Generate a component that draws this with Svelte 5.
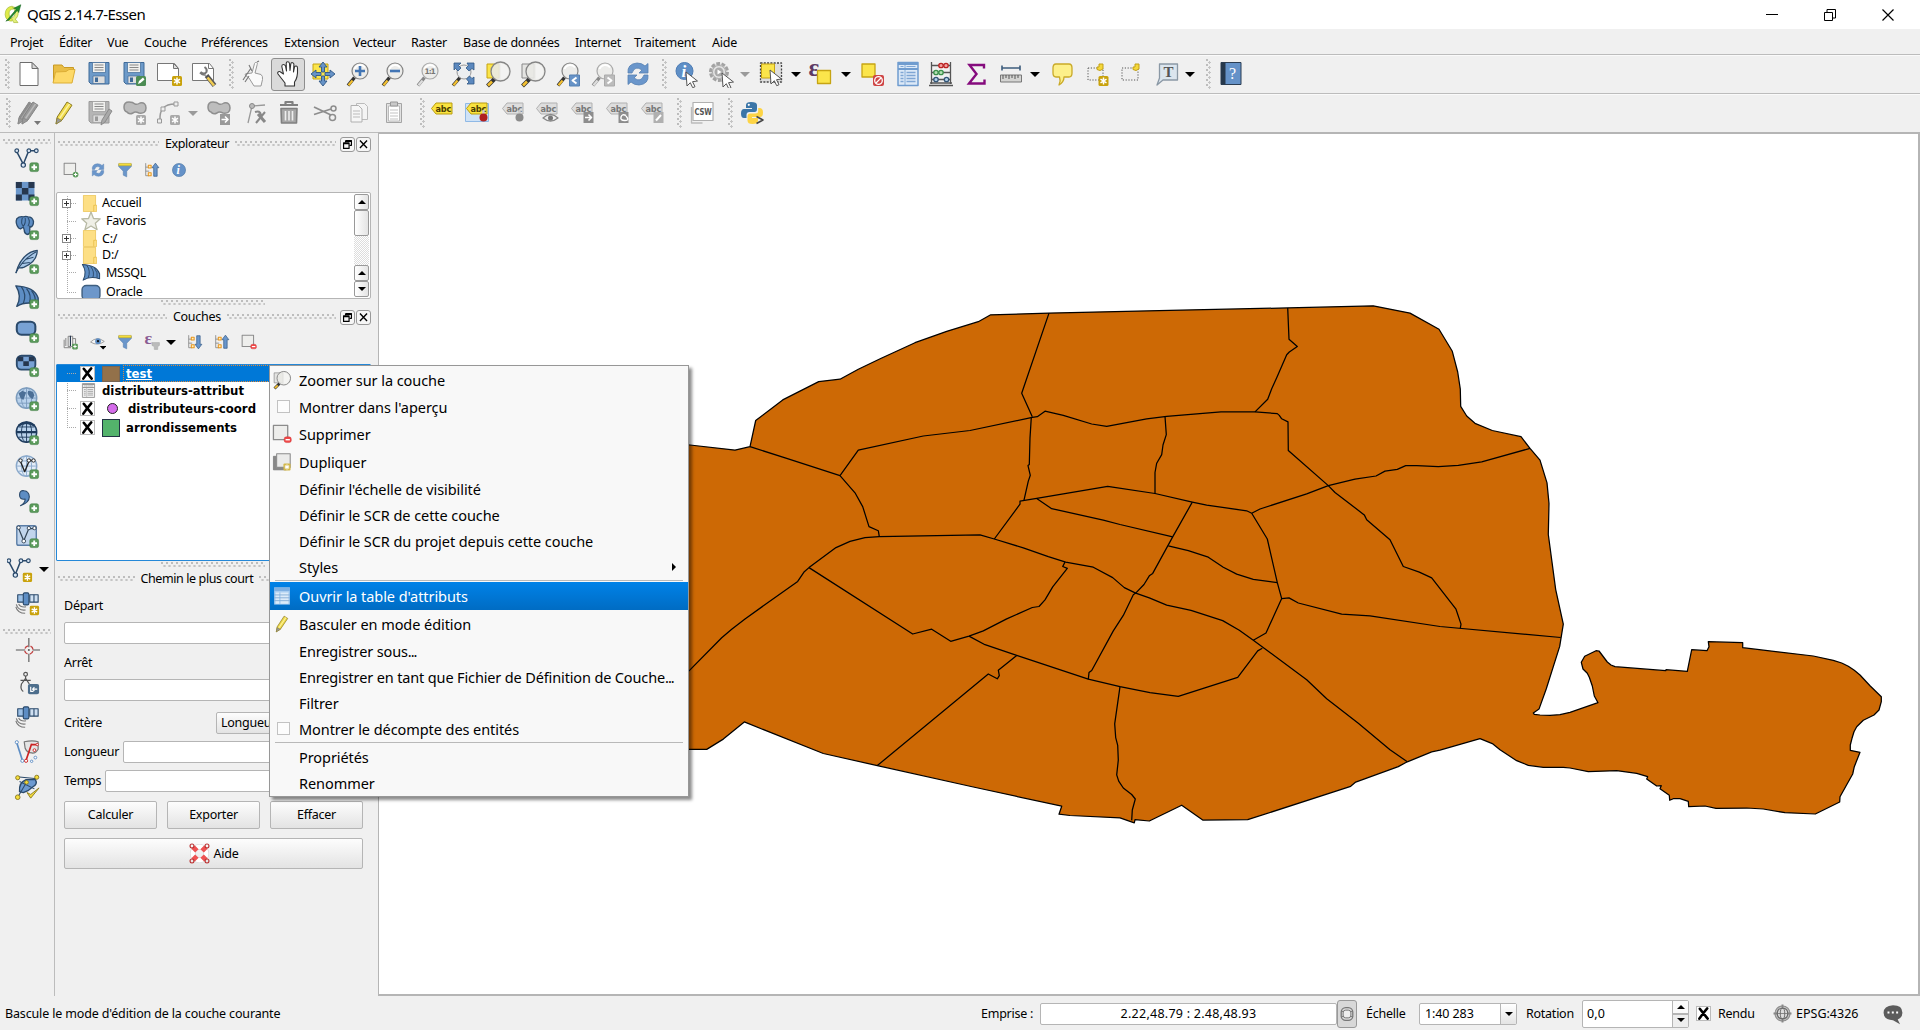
<script>
  const INK = '#2b4a6b';
  const svg = (body, size = 28) =>
    `<svg width="${size}" height="${size}" viewBox="0 0 28 28" fill="none" stroke-linejoin="round">${body}</svg>`;

  // Shared icon parts
  const sparkle = (x, y, c = '#c9a20c') =>
    `<rect x="${x}" y="${y}" width="10" height="10" rx="1.5" fill="${c}"/><path d="M${x + 5} ${y + 1.5}v7M${x + 2} ${y + 3.2}l6 3.6M${x + 2} ${y + 6.8}l6-3.6" stroke="#fff" stroke-width="1.5"/>`;
  const plus = (x = 17, y = 17) =>
    `<rect x="${x}" y="${y}" width="9.5" height="9.5" rx="2" fill="#5a9a5a" stroke="#3f7d43" stroke-width=".6"/><path d="M${x + 4.75} ${y + 1.8}v6M${x + 1.8} ${y + 4.75}h6" stroke="#fff" stroke-width="2"/>`;
  const arrowBadge = (x, y, c = '#8d8d8d') =>
    `<rect x="${x}" y="${y}" width="10" height="11" fill="${c}"/><path d="M${x + 1.5} ${y + 5.5}h6M${x + 5} ${y + 2.5}l3 3-3 3" stroke="#fff" stroke-width="1.6"/>`;
  const lens = (inner = '', handle = '#f2bf30', ring = '#858585', dark = '#333') =>
    `<path d="M10.500 17.500L4 25.500" stroke="${dark}" stroke-width="3.400"/><path d="M8.500 20.500L4.500 25.300" stroke="${handle}" stroke-width="2.200"/><circle cx="16" cy="11" r="8" fill="#ececea" stroke="${ring}" stroke-width="1.200"/><path d="M10.500 9a6 6 0 0 1 10.500-1.500" stroke="#fff" stroke-width="1.800"/>${inner}`;
  const bigLens = (under) =>
    under + `<path d="M10.500 19L3.500 26" stroke="#333" stroke-width="4"/><path d="M8 21.500L4 25.500" stroke="#f2bf30" stroke-width="2.600"/><circle cx="16.500" cy="11.500" r="9.500" fill="#e9e9e5" fill-opacity=".9" stroke="#858585" stroke-width="1.300"/><path d="M16.500 3.500a8 8 0 0 1 0 16z" fill="#fff" fill-opacity=".45"/>`;
  const cursor = (x, y) =>
    `<path d="M${x} ${y}l11.500 9-5 .7 2.500 5-2.300 1-2.400-5-3.300 3.300z" fill="#fff" stroke="#555" stroke-width="1"/>`;
  const label = (fill, edge, ink, extra = '') =>
    `<path d="M3.500 9.500L8 4h16v11H8z" fill="${fill}" stroke="${edge}"/><text x="7.500" y="12.700" font-family="DejaVu Sans" font-size="8.500" font-weight="bold" fill="${ink}" textLength="15.500" lengthAdjust="spacingAndGlyphs">abc</text>${extra}`;
  const greyLabel = (extra) => label('#dedede', '#b0b0b0', '#777', extra);
  const pencil = (a, b, c) =>
    `<path d="M6 25l1.200-7L17 3l5 3.200L12 21z" fill="${a}" stroke="${b}"/><path d="M9.500 19.500L19.500 4.800" stroke="${c}" stroke-width="1.500"/><path d="M6 25l1-6 5 2.500z" fill="#999" stroke="${b}" stroke-width=".6"/>`;
  const vee = () =>
    `<g stroke="${INK}" stroke-width="1.600"><path d="M3.500 6L10 18.500 15.500 5M17 4h5"/><g fill="#dce8f5" stroke-width="1.300"><circle cx="3" cy="4" r="2"/><circle cx="10" cy="19.500" r="2.300"/><circle cx="16" cy="4" r="2"/><circle cx="24" cy="4" r="2"/></g></g>`;
  const floppy = (a, b) =>
    `<path d="M4 2.500h20V24H6l-2-2z" fill="${a}" stroke="${b}"/><rect x="7.500" y="2.500" width="13" height="10" fill="#f0f0ee" stroke="${b}" stroke-width=".7"/><path d="M9.500 5h9M9.500 7.500h9M9.500 10h9" stroke="#888"/><rect x="8" y="16" width="12" height="7.500" fill="#ddd" stroke="${b}" stroke-width=".7"/><rect x="10" y="17.500" width="3" height="4.500" fill="${b}"/>`;
  const poly =
    `<path d="M3 8q0-5 5-5 4 0 6 2 2 1 5-1 6-1 6 5 0 6-7 5-4-2-6 0-4 2-6-1-3-1-3-5z" fill="#bdbdbd" stroke="#8f8f8f" stroke-width="1.500"/>`;
  const globe = (fill, line) =>
    `<circle cx="13.500" cy="13" r="11" fill="${fill}" stroke="${line}" stroke-width="1.500"/><path d="M3 13h21M5 7.500h17M5 18.500h17M13.500 2v22" stroke="${line}"/><ellipse cx="13.500" cy="13" rx="5.500" ry="11" stroke="${line}"/>`;
  const sail =
    `<path d="M2 2q20 1 24 13v7q-13-4-23 2Q9 13 2 2z" fill="#5d8dc4" stroke="${INK}" stroke-width="1.500"/><path d="M8 3q6 8 2 18M13.500 5q6 7 3 16M19 7.500q5 6 3.500 13" stroke="${INK}" stroke-width="1.300"/>`;
  const satellite =
    `<g stroke="${INK}" stroke-width="1.200"><rect x="4" y="4" width="7" height="8" fill="#9cc0e6"/><rect x="17" y="4" width="9" height="8" fill="#cfe0f2"/><path d="M21.500 4v8"/><rect x="10" y="2" width="6" height="13" rx="1.500" fill="#5d8dc4"/></g><path d="M13 17q-6 1-8-3M12.500 20.500q-8 1-10-6M12 24q-8 0-10-7" stroke="#777" stroke-width="1.200"/>`;
  const refresh = `<path d="M4 13Q3 4 13 3q5 0 8 3l3-2.500V13h-9l3-3q-7-5-10 3z" fill="#6a96cb" stroke="#5580b3" stroke-width=".8"/><path d="M24 15q1 9-9 10-5 0-8-3l-3 2.500V15h9l-3 3q7 5 10-3z" fill="#6a96cb" stroke="#5580b3" stroke-width=".8"/>`;
  const table = (a, b, c) =>
    `<rect x="4" y="2.500" width="20" height="23" fill="${a}" stroke="${b}" stroke-width="1.500"/><path d="M4 4h20M4 9h20" stroke="${b}" stroke-width="1.800"/><path d="M6.500 6.500h3M12.500 6.500h9" stroke="${c}"/><path d="M6.500 12.500h3M12.500 12.500h9M6.500 15.500h3M12.500 15.500h9M6.500 18.500h3M12.500 18.500h9M6.500 21.500h3M12.500 21.500h9" stroke="${c}" stroke-width="1.300"/><path d="M11 3v22" stroke="${b}" stroke-width=".8"/>`;
  const funnel = `<path d="M3 4h22v4l-8 8v10l-6-3v-7L3 8z" fill="#6a96cb" stroke="#557fae"/><rect x="3" y="2.500" width="22" height="4" fill="#f5dd3a" stroke="#b9a11d" stroke-width=".8"/>`;
  const fold = (arrow) =>
    `<path d="M3 2v22h6M3 9h6M3 16h6" stroke="#888" stroke-width="1.500"/><g fill="#fff2c0" stroke="#e8951d" stroke-width="1.800"><rect x="7.500" y="5.500" width="5" height="5"/><rect x="7.500" y="19" width="5" height="5"/></g><path d="${arrow}" fill="#6a96cb" stroke="#2f5784" stroke-width="1.200"/>`;
  const greyBox = `<rect x="2" y="2" width="20" height="20" fill="#eeeeec" stroke="#8c8c8c" stroke-width="1.800"/>`;
  const minus = `<rect x="17" y="18" width="10" height="8" rx="3" fill="#f04848" stroke="#cc2f2f" stroke-width=".6"/><path d="M19 22h6" stroke="#fff" stroke-width="2"/>`;

  const icons = {
    qgis: `<path d="M13 3Q3 4 3 15q1 9 9 9l3-4Q9 21 8.500 14T15 7z" fill="#dfec4a" stroke="#a9bb3a"/><path d="M14 4q9 1 7 11-1 5-4 6l4 5h-6l-3-6q5-2 5-7t-3-8z" fill="#e3f07a" stroke="#a9bb3a"/><path d="M4 24l4.500-1.500L20 9l2 3 3-11-10 5 3.500 1.500L7 21z" fill="#218c2e" stroke="#125c1b" stroke-width=".7"/>`,
    new: `<path d="M5 2.500h12l6 6v17H5z" fill="#fff" stroke="#6d6d6d"/><path d="M17 2.500v6h6z" fill="#d8d8d8" stroke="#6d6d6d"/>`,
    open: `<path d="M3.500 22V5H12l2 2.500h9.500V12" fill="#e9bd45" stroke="#c89a25"/><path d="M3 23L5.500 12l10.500-.5 3-2h6l-3 13.500z" fill="#fdd968" stroke="#dcae35"/>`,
    save: floppy('#6d9ac9', '#3f6a98'),
    saveas: floppy('#6d9ac9', '#3f6a98') + `<rect x="16" y="16" width="10" height="10" rx="1.500" fill="#4c8c54"/><path d="M18 24l1-3 4-3.500 1.500 2-4 3.500z" fill="#fff"/>`,
    composer: `<path d="M2.500 3.500h17l4 5v12h-21z" fill="#fff" stroke="#777"/><path d="M18.500 3.500v5h5z" fill="#ddd" stroke="#777"/>` + sparkle(17, 16),
    manager: `<path d="M2.500 3.500h17l4 5v12h-21z" fill="#fff" stroke="#777"/><path d="M18.500 3.500v5h5" stroke="#777"/><path d="M16.500 15.500l8 10" stroke="#555" stroke-width="4.600"/><path d="M17.500 17.500l6.500 8" stroke="#f0cb52" stroke-width="2.600"/><path d="M10.500 12q4 3 6 0 1-3-2-5M10 12.500q3 3 6 2" stroke="#777" stroke-width="2"/>`,
    touch: `<path d="M12 13L14.500 3.500q.6-1.500 2-1t.7 2L15 13l6 1.500q2 1.500 1.500 5L21 26h-7l-5-8-4-3q0-2 3-1.500z" fill="#fafafa" stroke="#999"/><path d="M3 20L11 8M9 5l3 6M5 22l4-6M17 2l2-1" stroke="#777" stroke-width="1.100"/>`,
    pan: `<path d="M9.500 14L7.800 6.500q0-2 1.500-2T11.500 6l1 5-.3-7.500q0-1.700 1.500-1.700T15.500 3.500l.5 7 .8-6.500q.2-1.500 1.700-1.300t1.400 1.700L19.500 12l1-5q.6-1.300 1.800-1T23.500 8q.5 10-3 14v4H11v-3l-7-9q-.8-1.600.5-2.200t2 .2z" fill="#fff" stroke="#333" stroke-width="1.100"/>`,
    pansel: `<rect x="4" y="4" width="15" height="15" fill="#fbe54b" stroke="#c6a413"/><path d="M14 2l4 5h-2.500v5h-3V7H10zM14 26l4-5h-2.500v-5h-3v5H10zM2 14l5-4v2.500h5v3H7V18zM26 14l-5-4v2.500h-5v3h5V18z" fill="#6793c7" stroke="#2f5784" stroke-width=".9"/>`,
    zoomin: lens(`<path d="M16 6v10M11 11h10" stroke="#4275b4" stroke-width="2.600"/>`),
    zoomout: lens(`<path d="M11 11h10" stroke="#4275b4" stroke-width="2.600"/>`),
    zoom11: lens(`<text x="10.500" y="14" font-family="DejaVu Sans" font-size="7.500" font-weight="bold" fill="#777" textLength="11">1:1</text>`, '#ddd', '#aaa', '#888'),
    full: `<path d="M11.500 17L4 25.500" stroke="#333" stroke-width="3.400"/><path d="M8.500 20.500L4.500 25.300" stroke="#f2bf30" stroke-width="2.200"/><circle cx="15" cy="12" r="7" fill="#eceef0" stroke="#999"/><path d="M5 3h7L9.500 5.500 12 8l-3 3-2.500-2.500L5 10zM25 3v7l-2-1.500L20 11l-3-3 2.500-2.500L18 3zM25 24h-7l2-2-2.500-3 3-3 2.500 2.500 2-1.500z" fill="#5b88be" stroke="#2f5784" stroke-width=".8"/>`,
    zoomsel: bigLens(`<rect x="3" y="4" width="12" height="14" fill="#fbe54b" stroke="#c6a413"/>`),
    zoomlayer: bigLens(`<rect x="3" y="4" width="12" height="14" fill="#e4e4e2" stroke="#888"/>`),
    last: lens(`<rect x="15.500" y="15" width="10" height="11" fill="#6793c7" stroke="#5580b3"/><path d="M22.500 17.500l-4 3 4 3" stroke="#fff" stroke-width="2"/>`),
    next: lens(`<rect x="15.500" y="15" width="10" height="11" fill="#bcbcbc" stroke="#aaa"/><path d="M18.500 17.500l4 3-4 3" stroke="#fff" stroke-width="2"/>`, '#ddd', '#aaa', '#888'),
    refresh,
    identify: `<circle cx="11.500" cy="11" r="8.500" fill="#5f8fc6" stroke="#4d7cb5"/><text x="8.500" y="16.500" font-family="Liberation Serif" font-size="17" font-weight="bold" font-style="italic" fill="#fff">i</text>` + cursor(13, 12),
    action: `<circle cx="13" cy="12" r="8.500" fill="#d7d7d7" stroke="#a2a2a2" stroke-width="3" stroke-dasharray="3.700 1.600"/><circle cx="13" cy="12" r="6.500" fill="#e6e6e6" stroke="#aaa"/><circle cx="13" cy="12" r="4.500" fill="#aaa"/><path d="M11.500 9.500l4 2.500-4 2.500z" fill="#fff"/>` + cursor(16, 13),
    select: `<rect x="3.500" y="3" width="21" height="19" stroke="#444" stroke-width="1.300" stroke-dasharray="2 1.300" fill="#dedede"/><rect x="4.500" y="4" width="13" height="14" fill="#fbe54b" stroke="#c6a413"/>` + cursor(13, 10),
    epsilon: `<text x="1.500" y="15.500" font-family="Liberation Serif" font-size="25" font-weight="bold" fill="#5e3a63">ε</text><rect x="10.500" y="10.500" width="13" height="13" fill="#fbe54b" stroke="#c6a413" stroke-width="1.300"/>`,
    deselect: `<rect x="4" y="4" width="13" height="13" fill="#fbe54b" stroke="#c6a413" stroke-width="1.300"/><rect x="15" y="15" width="11" height="11" rx="2" fill="#cf4545"/><circle cx="20.500" cy="20.500" r="3.800" stroke="#fff" stroke-width="1.300"/><path d="M23 18l-5 5" stroke="#fff" stroke-width="1.300"/>`,
    table: table('#dce9f7', '#6f9ccf', '#7fa6d4'),
    abacus: `<path d="M4.500 2v22M23.500 2v22M2 25.500h24M3 23h22M4 5.500h20M4 12.500h20M4 19.500h20" stroke="#555" stroke-width="1.300"/><g stroke-width="1.300"><g fill="#f3a0a0" stroke="#b22"><circle cx="14" cy="5.500" r="2.200"/><circle cx="19" cy="5.500" r="2.200"/></g><g fill="#b3e0b3" stroke="#3a8f4a"><circle cx="9" cy="12.500" r="2.200"/><circle cx="14" cy="12.500" r="2.200"/></g><g fill="#b5d3ea" stroke="#357"><circle cx="9" cy="19.500" r="2.200"/><circle cx="19.500" cy="19.500" r="2.200"/></g></g>`,
    sigma: `<path d="M22 8.500V5H7.500L14.500 14 7 23.500h15.500V19.500" stroke="#850b7d" stroke-width="2.400" stroke-linejoin="miter"/>`,
    ruler: `<path d="M5 8h18M5 5.500v5M23 5.500v5" stroke="#3c5c7c" stroke-width="1.600"/><rect x="3.500" y="15" width="21" height="7" fill="#d4d4d2" stroke="#777"/><path d="M6 15v4M9 15v3M12 15v4M15 15v3M18 15v4M21 15v3" stroke="#555"/>`,
    tip: `<path d="M8 4h13q3 0 3 4v5q0 4-3 4h-5q0 5-5 8 2-4 .5-8H8q-3 0-3-4V8q0-4 3-4z" fill="#fdf08a" stroke="#c9a927" stroke-width="1.300"/>`,
    bmnew: `<rect x="3" y="8" width="15" height="12" fill="#efefef" stroke="#555" stroke-dasharray="1.200 1.600"/><path d="M14 4h4v5l-3 1.500-3-1V7h2z" fill="#f5d83a" stroke="#c2a017"/>` + sparkle(13.500, 16),
    bm: `<rect x="4" y="8" width="16" height="12" fill="#efefef" stroke="#555" stroke-dasharray="1.200 1.600"/><path d="M17 4h4v5l-3 1.500-3-1V7h2z" fill="#f5d83a" stroke="#c2a017"/>`,
    text: `<path d="M6.500 4h18v16H10l-6 5 2.500-7z" fill="#dbe5ee" stroke="#8a98a5" stroke-width="1.300"/><text x="10.500" y="17" font-family="Liberation Serif" font-size="15" font-weight="bold" fill="#555">T</text>`,
    help: `<rect x="4" y="2.500" width="20" height="22" fill="#6592c8" stroke="#2b3d52"/><rect x="4" y="2.500" width="4.500" height="22" fill="#26384c"/><text x="12" y="19" font-family="Liberation Serif" font-size="16" fill="#fff">?</text>`,
    pencils: `<g transform="translate(-4 0)">${pencil('#8d8d8d', '#888', '#a8a8a8')}</g><g transform="translate(0 0)">${pencil('#999', '#858585', '#bbb')}</g><path d="M18 22h7l-3.500 4z" fill="#777"/>`,
    pencil: pencil('#f0da4a', '#8a7a22', '#fbf3a0'),
    gsave: floppy('#b5b5b5', '#9a9a9a') + `<path d="M16 26l1-5 7-11 3 2-7 11z" fill="#a9a9a9" stroke="#8b8b8b"/>`,
    addfeat: poly + sparkle(15, 16, '#a9a9a9'),
    curve: `<path d="M5 21Q4 5 20 5" stroke="#999" stroke-width="1.500"/><g fill="#eee" stroke="#999"><rect x="2.500" y="20" width="4" height="4"/><rect x="6" y="8" width="4" height="4"/><rect x="19" y="3" width="4" height="4"/></g>` + sparkle(15, 16, '#a9a9a9'),
    movefeat: poly + arrowBadge(15, 15, '#999'),
    node: `<path d="M6 24L10 7l13-1" stroke="#999" stroke-width="1.300"/><circle cx="10" cy="7" r="2.500" fill="#bbb" stroke="#888"/><path d="M16 15l7 8" stroke="#888" stroke-width="3"/><path d="M23 13l-9 11M13 13q5-2 6 3" stroke="#888" stroke-width="2"/>`,
    trash: `<path d="M5 6h18M10.500 5.500V3h7v2.500" stroke="#808080" stroke-width="2.200"/><path d="M6 9.500h16L21.500 24h-15z" fill="#a6a6a6" stroke="#808080" stroke-width="1.600"/><path d="M10.500 12v9.500M14 12v9.500M17.500 12v9.500" stroke="#eee" stroke-width="1.600"/>`,
    scissors: `<path d="M3 8l17 8M3 15.500l17-5.500" stroke="#8d8d8d" stroke-width="1.800"/><circle cx="22.500" cy="9.500" r="2.500" stroke="#8d8d8d" stroke-width="1.500"/><circle cx="21.500" cy="18.500" r="3" stroke="#8d8d8d" stroke-width="1.500"/>`,
    copy: `<path d="M11.500 4.500h8l3 3v13h-11z" fill="#f4f4f4" stroke="#bbb"/><path d="M6 6.500h7.500l3.500 3.500v13H6z" fill="#f6f6f6" stroke="#b0b0b0"/><path d="M8 12h7M8 15h7M8 18h7" stroke="#bbb"/>`,
    paste: `<rect x="6.500" y="4.500" width="15" height="19" fill="#e2e2e2" stroke="#a5a5a5"/><rect x="8.500" y="7" width="11" height="15" fill="#fff" stroke="#bbb"/><rect x="10.500" y="3" width="7" height="4" fill="#c9c9c9" stroke="#999"/><path d="M10 11h8M10 14h8M10 17h8M10 20h8" stroke="#c3c3c3"/>`,
    abc: label('#fae33f', '#b99c11', '#4a3b00'),
    abcpin: `<rect x="2.500" y="4.500" width="23" height="18" fill="#cfe2f6" stroke="#8fb9e6"/>` + label('#fae33f', '#b99c11', '#4a3b00', `<path d="M20.500 17v-6" stroke="#ccc" stroke-width="2.400"/><circle cx="20.500" cy="18.500" r="4" fill="#b02020"/>`),
    abc1: greyLabel(`<path d="M20.500 17v-6" stroke="#ccc" stroke-width="2.400"/><circle cx="20.500" cy="18.500" r="4" fill="#8b8b8b"/>`),
    abc2: greyLabel(`<path d="M10 19q7.500-7 15 0-7.500 6-15 0z" fill="#eee" stroke="#888" stroke-width="1.300"/><circle cx="17.500" cy="19" r="2.500" fill="#777"/>`),
    abc3: greyLabel(arrowBadge(15.500, 13)),
    abc4: greyLabel(`<rect x="15.500" y="13" width="10" height="11" fill="#8d8d8d"/><path d="M23 16.500q-4-2-5 1.500t4 3.500 1-4.500" stroke="#fff" stroke-width="1.400"/>`),
    abc5: greyLabel(`<rect x="15.500" y="13" width="10" height="11" fill="#b0b0b0"/><path d="M18 21.500l5-5.500" stroke="#fff" stroke-width="2"/>`),
    csw: `<path d="M3.500 8v16h11" stroke="#bbb" stroke-width="1.300"/><rect x="5" y="3.500" width="20" height="18" fill="#fff" stroke="#b0b0b0" stroke-width="1.200"/><text x="6.500" y="15.500" font-family="DejaVu Sans" font-size="8.500" font-weight="bold" fill="#555" textLength="17" lengthAdjust="spacingAndGlyphs">CSW</text>`,
    python: `<path d="M13 3q-5 0-5 3v3h6v1H6q-3 0-3 4.500T6 19h2.500v-3q0-3 3-3h5q2.500 0 2.500-3V6q0-3-6-3z" fill="#3b76a8"/><circle cx="10.800" cy="5.800" r="1.100" fill="#fff"/><path d="M14.500 25q5.500 0 5.500-3v-3h-6v-1h8q3 0 3-4.500T21.500 9h-1.300v3q0 2.500-3 2.500h-5q-2.700 0-2.700 3v4q0 3.500 5 3.500z" fill="#fdd445"/><path d="M18.500 17.500l6.500 3.500-6.500 3.500" stroke="#444" stroke-width="1.500"/>`,

    vector: vee() + plus(),
    raster: `<g transform="translate(2 1)"><rect width="20" height="20" fill="#6b97cb"/><path d="M0 0h6.500v6.500H0zM13.500 0H20v6.500h-6.500zM6.500 6.500h7v7h-7zM0 13.500h6.500V20H0zM13.500 13.500H20V20h-6.500z" fill="#26374f"/></g>` + plus(),
    postgis: `<path d="M3 4q3-3 7-2 3-1 5 0 5 0 6 5 0 5-3 6l-1-1v7q-1 2-3 2-3-1-3-5l-1-3-3 2-2-1Q1 9 3 4z" fill="#5d8dc4" stroke="${INK}" stroke-width="1.400"/><path d="M9 3q-2 6 1 9 3-3 2-9M15 3q3 4 0 9" stroke="${INK}" stroke-width="1.100"/>` + plus(),
    feather: `<path d="M2 26Q8 4 25 1.500q0 12-14 18-4 1.500-6 .5" fill="#a9c8e8" stroke="${INK}" stroke-width="1.400"/><path d="M2 26Q9 11 24 3M9 15.500l8-1M13 11l8-2" stroke="${INK}" stroke-width="1.100"/>` + plus(),
    mssql: sail + plus(),
    oracle: `<rect x="3" y="4" width="20" height="14" rx="5" fill="#78a2d4" stroke="${INK}" stroke-width="2.200"/>` + plus(),
    georaster: `<rect x="3" y="4" width="20" height="15" rx="5" fill="#78a2d4" stroke="${INK}" stroke-width="2"/><path d="M4 5h6v5H4zM16 5h6v5h-6zM10 10h6v5h-6z" fill="#26374f"/>` + plus(),
    wms: globe('#b9d2ec', '#7c9cbd') + `<path d="M5 8l4-3 4 2-1 3-2 5-3-2zM15 5l5 1 2 4-2 4-3-2-2-3z" fill="#4c6f96"/>` + plus(),
    wcs: globe('#b9d2ec', '#1f3c5e') + `<path d="M5 6q8-6 17 0M3 13h21" stroke="#1f3c5e" stroke-width="2.300"/>` + plus(),
    wfs: globe('#e3edf8', '#8aa9cb') + `<path d="M7 8l4.500 11 5-12h4" stroke="#222" stroke-width="1.500"/><g fill="#fff" stroke="#222"><circle cx="7" cy="7" r="1.800"/><circle cx="16" cy="7" r="1.800"/><circle cx="21" cy="7" r="1.800"/></g>` + plus(),
    comma: `<path d="M7 19q5-3 5-7-6 1-6-4.500T11 3q5 .5 5.500 6.500Q16.500 16 7 19z" fill="#5d8dc4" stroke="${INK}" stroke-width="1.200"/>` + plus(),
    virtual: `<rect x="3" y="3" width="21" height="21" rx="2" fill="#c1d5ec" stroke="#5a7da6" stroke-width="1.500"/><path d="M5 6l5.500 13L16 6h5" stroke="#345" stroke-width="1.300"/><g fill="#fff" stroke="#345"><circle cx="5" cy="5" r="1.800"/><circle cx="10.500" cy="19.500" r="2"/><circle cx="16" cy="5.500" r="1.800"/><circle cx="22" cy="5.500" r="1.800"/></g>` + plus(),
    newvector: `<g transform="translate(-1 0)">${vee()}</g>` + sparkle(17, 17),
    gpsnew: satellite + sparkle(17, 16),
    cross: `<path d="M16 1v10M16 18v9M2 14h10M20 14h8M16 13v2M15 14h2" stroke="#555" stroke-width="1.200"/><circle cx="16" cy="14" r="4.500" stroke="#c04040" stroke-width="1.500" stroke-dasharray="4.500 2.570" stroke-dashoffset="-1.300"/>`,
    compass: `<circle cx="12.500" cy="3.500" r="2" stroke="#555" stroke-width="1.300"/><path d="M12.500 5.500v3M7 10h11M12.500 8L8 14q-1.500 6 2 8M12.500 8l4 6" stroke="#555" stroke-width="1.300"/><rect x="15" y="14" width="12" height="11" rx="2" fill="#4d6e8c"/><path d="M18 17v5h3M25 19.500h-5M22 17.500l-2 2 2 2" stroke="#fff" stroke-width="1.200"/>`,
    gps: satellite,
    topo: `<path d="M3 4l6 19" stroke="#5d8dc4" stroke-width="1.800"/><path d="M11 3q9-2 15 0v8q-3 5-7 4-5 0-7-5z" fill="#e4e4e4" stroke="#777" stroke-width="1.300"/><path d="M13 23L19 5M19 6h6" stroke="#c22" stroke-width="1.800"/><g fill="#fff" stroke="#5d8dc4"><circle cx="3" cy="3.500" r="1.700"/><circle cx="9" cy="23.500" r="1.700"/><circle cx="19" cy="24" r="1.300"/><circle cx="23" cy="20" r="1.500"/></g><g fill="#fff" stroke="#c22"><circle cx="13" cy="23.500" r="1.700"/><circle cx="22" cy="12" r="1.500"/><circle cx="25" cy="6" r="1.300"/></g>`,
    check: `<path d="M6 19Q5 9 13 6l10 0q3 5-3 8l-5 4-5 2z" fill="#6d9ad0" stroke="${INK}" stroke-width="1.500"/><path d="M3 3l22 2M4 25l10-17M6 8l16 8" stroke="${INK}" stroke-width="1.100"/><g fill="#f5dd3a" stroke="#8a7a22"><circle cx="4" cy="4" r="2.200"/><circle cx="24.500" cy="3.500" r="2.200"/><circle cx="13.500" cy="9" r="2"/><circle cx="4" cy="25" r="2.500"/><path d="M14 20l4 2 9-7-9 11z"/></g>`,

    addlayer: greyBox + `<circle cx="22" cy="22" r="5" fill="#5a9a5a"/><path d="M22 19v6M19 22h6" stroke="#fff" stroke-width="1.800"/>`,
    funnel,
    collapse: fold('M20 2l6 8h-3v15h-6V10h-3z'),
    expand: fold('M20 26l6-8h-3V3h-6v15h-3z'),
    info: `<circle cx="14" cy="14" r="11.500" fill="#6592c8" stroke="#45719f"/><text x="9.500" y="21" font-family="Liberation Serif" font-size="21" font-weight="bold" font-style="italic" fill="#fff">i</text>`,
    addgroup: `<path d="M2 10v14h12M5 7v14M9 4h8v18H9zM17 8h5v10" stroke="#777" stroke-width="1.500"/><path d="M13 3v18" stroke="#26374f" stroke-width="2"/><rect x="16" y="17" width="10" height="10" rx="2" fill="#5a9a5a"/><path d="M21 19v6M18 22h6" stroke="#fff" stroke-width="1.800"/>`,
    eye: `<path d="M1 14Q12 3 25 13q-12 9-24 1z" fill="#f5f5f5" stroke="#999" stroke-width="1.600"/><circle cx="14" cy="12.500" r="5" fill="#5d8dc4"/><circle cx="14" cy="12.500" r="2" fill="#111"/><path d="M17 21h12l-6 6z" fill="#000"/>`,
    epsfunnel: `<text x="1" y="18" font-family="Liberation Serif" font-size="31" font-weight="bold" fill="#8a5b93">ε</text><path d="M14 15h13v5l-3 2v5h-6v-5l-4-2z" fill="#bbb" stroke="#aaa"/>`,
    removelayer: greyBox + minus,
    duplicate: `<rect x="2" y="6" width="18" height="19" fill="#888" stroke="#777"/><rect x="6.500" y="2.500" width="19" height="19" fill="#ebebea" stroke="#8c8c8c" stroke-width="1.500"/>` + sparkle(16, 16, '#d3b84a'),
    menutable: `<rect x="3" y="2" width="22" height="24" fill="#a9cdf0"/><rect x="3" y="2" width="22" height="5" fill="#7fb0e2"/><g fill="#dcebf9"><path d="M5 9h5v16H5zM12 9h11v16H12z"/></g><path d="M3 12.500h22M3 16.500h22M3 20.500h22" stroke="#86aed6" stroke-width="1.300"/>`,
    greytable: table('#efefef', '#999', '#999'),
    folder: `<path d="M4 .5h20v16h1.500v11H4z" fill="#fddf85" stroke="#e9c04d" stroke-width="1.200"/><path d="M21 27V17h3" stroke="#e5b93f" stroke-width="1.200"/>`,
    star: `<path d="M14 1.500l3.500 9 9.500.5-7 6 2.500 9L14 21 5.500 26 8 17 1 11l9.500-.5z" fill="#efefe6" stroke="#b7b9a4" stroke-width="1.800"/>`,
    sail,
    cyl: `<rect x="1.500" y="5" width="25" height="20" rx="6" fill="#6d97ca" stroke="#3f5f80" stroke-width="2"/>`,
    lifebuoy: `<circle cx="14" cy="14" r="9" stroke="#d4d4d4" stroke-width="7.500"/><circle cx="14" cy="14" r="9" stroke="#fff" stroke-width="6"/><path d="M5.500 5.500l5 5M22.500 5.500l-5 5M5.500 22.500l5-5M22.500 22.500l-5-5" stroke="#ee5252" stroke-width="6.500"/><g stroke="#b33" stroke-width="1.500"><circle cx="4" cy="4" r="2.600"/><circle cx="24" cy="4" r="2.600"/><circle cx="4" cy="24" r="2.600"/><circle cx="24" cy="24" r="2.600"/></g>`,
    crs: `<circle cx="14" cy="14" r="10" fill="#c4c4c4" stroke="#8d8d8d" stroke-width="1.500"/><path d="M2 14h24M14 2v24" stroke="#888" stroke-width="2.600"/><path d="M14 7q7 0 7 7t-7 7-7-7 7-7z" stroke="#6b6b6b" stroke-width="1.600" fill="#ddd"/><ellipse cx="14" cy="14" rx="3" ry="7" stroke="#6b6b6b" stroke-width="1.300"/><path d="M7 14h14" stroke="#6b6b6b"/>`,
    bubble: `<path d="M14 3q12 0 12 9.500 0 6-6 8.500l3 6-9-5Q2 21 2 12.500T14 3z" fill="#5c5c5c"/><path d="M7 12h2.500M12.500 12H15M18 12h2.500" stroke="#fff" stroke-width="2.600"/>`,
    extent: `<rect x="5" y="4" width="18" height="20" rx="7" stroke="#777" stroke-width="2"/><rect x="8" y="8" width="12" height="12" rx="4" stroke="#777" stroke-width="1.500" fill="#eee"/><path d="M5 9l4 2M23 9l-4 2M5 19l4-2M23 19l-4-2" stroke="#777" stroke-width="1.500"/>`,
    undock: `<path d="M9 4h15v12h-5M9 4v5M9 6h15" stroke="#000" stroke-width="3"/><path d="M4 10h14v14H4zM4 12h14" stroke="#000" stroke-width="3"/>`,
    close: `<path d="M5 4l18 19M23 4L5 23" stroke="#000" stroke-width="3.500"/>`,
    tick: `<path d="M6 4Q12 12 23 25M22 3Q14 12 5 25" stroke="#000" stroke-width="5.500" stroke-linecap="round"/>`,
  };

  const menus = [['Projet', 49], ['Éditer', 48], ['Vue', 37], ['Couche', 57], ['Préférences', 83], ['Extension', 69], ['Vecteur', 58], ['Raster', 52], ['Base de données', 112], ['Internet', 59], ['Traitement', 78], ['Aide', 40]];

  // [kind or icon name, slot width]
  const row1 = [['grip', 11], ['new', 35], ['open', 35], ['save', 35], ['saveas', 35], ['composer', 35], ['manager', 35], ['grip', 16], ['touch', 34], ['pan', 34], ['pansel', 35], ['zoomin', 35], ['zoomout', 35], ['zoom11', 35], ['full', 35], ['zoomsel', 35], ['zoomlayer', 35], ['last', 35], ['next', 35], ['refresh', 35], ['grip', 15], ['identify', 33], ['action', 34], ['dimdrop', 15], ['select', 38], ['drop', 12], ['epsilon', 38], ['drop', 12], ['deselect', 40], ['table', 31], ['abacus', 36], ['sigma', 34], ['ruler', 36], ['drop', 12], ['tip', 41], ['bmnew', 33], ['bm', 33], ['text', 37], ['drop', 10], ['grip', 22], ['help', 28]];
  const row2 = [['grip', 12], ['pencils', 36], ['pencil', 31], ['gsave', 40], ['addfeat', 31], ['curve', 37], ['dimdrop', 11], ['movefeat', 42], ['node', 31], ['trash', 36], ['scissors', 35], ['copy', 33], ['paste', 37], ['grip', 16], ['abc', 27], ['abcpin', 44], ['abc1', 27], ['abc2', 42], ['abc3', 28], ['abc4', 41], ['abc5', 30], ['grip', 20], ['csw', 29], ['grip', 25], ['python', 21]];
  const side1 = ['vector', 'raster', 'postgis', 'feather', 'mssql', 'oracle', 'georaster', 'wms', 'wcs', 'wfs', 'comma', 'virtual', 'newvector', 'gpsnew'];
  const side2 = ['cross', 'compass', 'gps', 'topo', 'check'];

  const tree = [['Accueil', 'folder', 18, true], ['Favoris', 'star', 18, false], ['C:/', 'folder', 17, true], ['D:/', 'folder', 16, true], ['MSSQL', 'sail', 19, false], ['Oracle', 'cyl', 20, false]];

  const context = [
    { t: 'Zoomer sur la couche', i: 'zoomlayer', tall: true },
    { t: "Montrer dans l'aperçu", box: true },
    { t: 'Supprimer', i: 'removelayer', tall: true },
    { t: 'Dupliquer', i: 'duplicate', tall: true },
    { t: "Définir l'échelle de visibilité" },
    { t: 'Définir le SCR de cette couche' },
    { t: 'Définir le SCR du projet depuis cette couche' },
    { t: 'Styles', sub: true },
    { sep: true },
    { t: "Ouvrir la table d'attributs", i: 'menutable', tall: true, hot: true },
    { t: 'Basculer en mode édition', i: 'pencil', tall: true },
    { t: 'Enregistrer sous', dots: true },
    { t: 'Enregistrer en tant que Fichier de Définition de Couche', dots: true },
    { t: 'Filtrer' },
    { t: 'Montrer le décompte des entités', box: true },
    { sep: true },
    { t: 'Propriétés' },
    { t: 'Renommer' },
  ];

  // Map geometry is digitised on three sheets; each has its own origin and scale.
  const sheets = { W: [690, 290, 3, 2.9037], E: [1120, 290, 3, 2.9037], B: [1500, 600, 3, 3] };
  const trace = (spec) => {
    let sheet = sheets.W;
    const pts = [];
    for (const token of spec.trim().split(/\s+/)) {
      if (sheets[token]) { sheet = sheets[token]; continue; }
      const [x, y] = token.split(',').map(Number);
      pts.push(`${(sheet[0] + x / sheet[2] - 379).toFixed(1)},${(sheet[1] + y / sheet[3] - 134).toFixed(1)}`);
    }
    return pts.join(' ');
  };

  const outline = trace(`W -60,444 0,450 135,465 180,455 197,379 278,319 386,266 450,259 505,230 572,199 675,153 770,120 865,92 902,72 1077,67 1440,59
    E 503,52 760,46 870,67 957,114 997,178 1013,238 1021,288 1022,338 1040,366 1065,387 1117,408 1203,426 1230,460 1260,494 1281,560 1287,620 1285,710 1307,870 1330,970 1319,1035 1279,1158 1257,1217 1240,1228
    B 103,343 120,345 150,346 180,344 210,337 294,308 283,288 277,258 268,232 262,220 249,207 244,187 254,169 288,152 297,153 322,186 333,195 345,200 497,212 498,209 562,214 575,149 621,152 627,140 625,125 728,128 728,143 940,168 1000,181 1025,189 1045,199 1063,211 1080,225 1110,257 1144,290 1144,305 1137,330 1122,345 1090,361 1070,380 1062,395 1056,415 1051,435 1051,451 1080,457 1063,500 1058,522 1020,590 1019,606 946,642 855,638 790,627 740,624 648,625 615,618 566,620 565,604 540,596 520,596 509,601 508,586 480,566 484,557 470,558 440,537 443,530 410,520 350,512 265,515 210,504 190,502 130,502 85,496 50,482 0,449
    E 1117,1317 1080,1303 960,1336 935,1341 862,1370 835,1384 707,1429 692,1441 383,1538 248,1539 185,1496 88,1542 45,1538 43,1547
    W 1290,1533 1140,1526 1107,1522 1115,1499 850,1443 562,1381 400,1346 245,1286 163,1254 100,1304 50,1334 0,1334 -60,1334`);

  const borders = [
    'W 180,455 290,489 450,539',
    'W 450,539 505,465 700,424 840,408 1027,370 1042,368 1065,352 1120,364 1205,389 1250,396 1370,374 1430,367 E 303,354 405,354 472,359 478,364 485,374 504,383 505,466 625,568 645,588 733,653 740,667 810,725 850,803 898,819 935,836 1008,927 1023,970 1021,982',
    'W 1077,67 995,300 1027,368',
    'W 1024,370 1020,430 1018,507 1014,510 1021,538 1015,555 1002,610',
    'W 450,539 495,589 518,629 537,687 565,699 568,716',
    'W -40,1140 0,1103 95,1010 125,985 165,955 323,846 343,818 357,806 438,748 480,730 525,719 568,716 870,711 913,723 1000,749 1075,774 1127,790 1210,805 1268,835 1303,864 1337,880 E 88,894 140,915 213,930 308,960 358,988 400,1017 560,1132 620,1187 715,1258 810,1335 862,1370',
    'W 913,723 990,622 990,613 1040,605 1253,570 1395,591 E 217,616 260,625 380,641 395,648 420,636 560,592 625,568 705,549 768,540 795,526 832,521 857,510 890,510 955,513 1015,509 1085,499 1230,460',
    'W 1040,605 1085,635 1240,668 E 0,681 158,717',
    'W 1425,367 1429,420 1419,450 1415,478 1400,503 1395,530 1395,591',
    'W 357,806 668,999 725,985 782,1020 837,1005 880,990 950,955 1027,922 1047,919 1065,900 1088,862 1132,808 1118,803 1125,790',
    'W 837,1005 885,1030 980,1061 1195,1130 1290,1152 1380,1169 E 175,1180 353,1125 413,1048 427,1040',
    'W 980,1061 925,1104 928,1120 922,1129 895,1115 562,1381',
    'W 1195,1130 1197,1111 1205,1105 1270,990 1300,945 1330,885 1337,880 E 72,855 88,830 98,823 158,717 217,616',
    'E 145,743 205,757 265,776 310,805 350,825 400,840 472,850',
    'E 395,648 442,723 472,850 485,896 438,996 400,1017',
    'E 485,896 507,894 535,909 665,941 750,946 960,977 1322,1009',
    'E 503,52 507,143 532,164 508,180 500,188 470,255 455,287 443,317 405,354',
    'W 1290,1152 1274,1260 1277,1300 1283,1322 1285,1365 1280,1408 1286,1426 1300,1446 1325,1465 1336,1478 1327,1510 1325,1540',
  ].map(trace);
</script>

{#snippet toolbar(items)}
  {#each items as [name, w]}
    {#if name === 'grip'}
      <div class="vgrip" style:width="{w}px"><i></i></div>
    {:else if name === 'drop' || name === 'dimdrop'}
      <div class="slot" style:width="{w}px"><b class="caret" class:dim={name === 'dimdrop'}></b></div>
    {:else}
      <div class="slot" class:pressed={name === 'pan'} style:width="{w}px">{@html svg(icons[name])}</div>
    {/if}
  {/each}
{/snippet}

{#snippet dockTitle(text, kind)}
  <div class="dock-title {kind}">
    <i class="hgrip"></i><span>{text}</span><i class="hgrip"></i>
    <button class="mini" aria-label="float">{@html svg(icons.undock, 11)}</button>
    <button class="mini" aria-label="close">{@html svg(icons.close, 11)}</button>
  </div>
{/snippet}

<div class="window">
  <header class="title">
    {@html svg(icons.qgis, 20)}
    <span>QGIS 2.14.7-Essen</span>
    <div class="controls">
      <svg width="12" height="12"><path d="M0 5.500h12" stroke="#000" /></svg>
      <svg width="12" height="12" fill="none" stroke="#000"><path d="M.5 3.500h8v8h-8zM3 3V.5h8.500V9H9" /></svg>
      <svg width="12" height="12" stroke="#000" stroke-width="1.200"><path d="M.5.5l11 11M11.500.5l-11 11" /></svg>
    </div>
  </header>
  <nav>
    {#each menus as [text, w]}<span style:width="{w}px">{text}</span>{/each}
  </nav>
  <div class="bar">{@render toolbar(row1)}</div>
  <div class="bar">{@render toolbar(row2)}</div>

  <main>
    <aside class="side">
      <i class="hgrip top"></i>
      {#each side1 as name}
        <div class="side-slot" class:withdrop={name === 'newvector'}>
          {@html svg(icons[name], 26)}
          {#if name === 'newvector'}<b class="caret"></b>{/if}
        </div>
      {/each}
      <i class="hgrip mid"></i>
      {#each side2 as name}<div class="side-slot">{@html svg(icons[name], 26)}</div>{/each}
    </aside>

    <section class="docks">
      {@render dockTitle('Explorateur', 'browser')}
      <div class="tools explorer">
        {#each ['addlayer', 'refresh', 'funnel', 'collapse', 'info'] as name}<span>{@html svg(icons[name], 16)}</span>{/each}
      </div>
      <div class="tree">
        <ul>
          {#each tree as [text, icon, h, expandable]}
            <li style:height="{h}px">
              <span class="branch">{#if expandable}<em></em>{/if}</span>
              <span class="ticon" class:narrow={icon === 'folder'}>{@html svg(icons[icon], icon === 'folder' ? 17 : 20)}</span>
              <span>{text}</span>
            </li>
          {/each}
        </ul>
        <div class="scroll">
          <b class="sb"><i class="up"></i></b>
          <b class="thumb"></b>
          <span></span>
          <b class="sb"><i class="up"></i></b>
          <b class="sb"><i class="down"></i></b>
        </div>
      </div>
      <i class="hgrip split"></i>
      {@render dockTitle('Couches', 'legend')}
      <div class="tools layers-tools">
        {#each ['addgroup', 'eye', 'funnel', 'epsfunnel'] as name}<span>{@html svg(icons[name], 16)}</span>{/each}
        <b class="caret"></b>
        {#each ['expand', 'collapse', 'removelayer'] as name}<span>{@html svg(icons[name], 16)}</span>{/each}
      </div>
      <ul class="layers">
        <li class="test"><span class="branch"></span><i class="cb">{@html svg(icons.tick, 13)}</i><i class="sw brown"></i><span class="focus"><u>test</u></span></li>
        <li class="attr"><span class="branch"></span><i class="tb">{@html svg(icons.greytable, 17)}</i>distributeurs-attribut</li>
        <li class="coord"><span class="branch"></span><i class="cb">{@html svg(icons.tick, 13)}</i><i class="dot"></i>distributeurs-coord</li>
        <li class="arr"><span class="branch"></span><i class="cb">{@html svg(icons.tick, 13)}</i><i class="sw green"></i>arrondissements</li>
      </ul>
      <i class="hgrip split"></i>
      {@render dockTitle('Chemin le plus court', 'road')}
      <div class="form">
        <label for="from">Départ</label>
        <input id="from" />
        <label for="to">Arrêt</label>
        <input id="to" />
        <div class="line criterion"><span>Critère</span><button class="combo">Longueur</button></div>
        <div class="line"><span>Longueur</span><div class="field"></div></div>
        <div class="line"><span>Temps</span><div class="field"></div></div>
        <div class="buttons"><button>Calculer</button><button>Exporter</button><button>Effacer</button></div>
        <button class="aide">{@html svg(icons.lifebuoy, 21)}Aide</button>
      </div>
    </section>

    <section class="canvas">
      <svg width="1539" height="860" stroke="#000" stroke-width="1.250" stroke-linejoin="round">
        <polygon points={outline} fill="#cd6905" />
        {#each borders as points}<polyline {points} fill="none" />{/each}
      </svg>
    </section>
  </main>

  <footer>
    <span class="hint">Bascule le mode d'édition de la couche courante</span>
    <span class="emprise">Emprise :</span>
    <div class="box extent">2.22,48.79 : 2.48,48.93</div>
    <div class="toggle">{@html svg(icons.extent, 18)}</div>
    <span class="echelle">Échelle</span>
    <div class="box scale"><span>1:40 283</span><b><i class="down"></i></b></div>
    <span class="rotation">Rotation</span>
    <div class="box spin"><span>0,0</span><b><i class="up"></i><i class="down"></i></b></div>
    <i class="cb">{@html svg(icons.tick, 13)}</i>
    <span class="rendu">Rendu</span>
    <span class="crs">{@html svg(icons.crs, 21)}</span>
    <span class="epsg">EPSG:4326</span>
    <span class="msg">{@html svg(icons.bubble, 22)}</span>
  </footer>

  <div class="context">
    {#each context as item}
      {#if item.sep}
        <hr />
      {:else}
        <div class="item" class:tall={item.tall} class:hot={item.hot} class:dotted={item.dots}>
          <span class="mark">
            {#if item.i}{@html svg(icons[item.i], 20)}{:else if item.box}<i class="empty"></i>{/if}
          </span>
          <span class="words">{item.t}{#if item.dots}<span class="dots">...</span>{/if}</span>
          {#if item.sub}<i class="right"></i>{/if}
        </div>
      {/if}
    {/each}
  </div>
</div>

<style>
  :global(body) { background: #f0f0f0; overflow: hidden; }
  .window { position: relative; width: 1920px; height: 1030px; display: flex; flex-direction: column; background: #f0f0f0; color: #000; font: 12.500px/16px 'Noto Sans', sans-serif; letter-spacing: -0.250px; box-sizing: border-box; }
  .window :global(svg) { display: block; flex: none; }
  .window :global(*) { box-sizing: border-box; }
  button { font: inherit; letter-spacing: inherit; color: #000; padding: 0; }
  ul { list-style: none; margin: 0; padding: 0; }

  .title { height: 29px; background: #fff; display: flex; align-items: center; padding: 0 0 2px 3px; gap: 4px; font-size: 15px; line-height: 20px; letter-spacing: -0.550px; }
  .controls { margin-left: auto; display: flex; gap: 46px; padding: 2px 26px 0 0; }
  nav { height: 25px; display: flex; align-items: center; padding: 2px 0 0 10px; white-space: nowrap; }
  nav span { flex: none; }

  .bar { height: 39px; display: flex; align-items: center; flex: none; border-top: 1px solid #bcbcbc; box-shadow: inset 0 1px #fafafa; }
  .slot { display: flex; justify-content: center; align-items: center; flex: none; height: 33px; }
  .pressed { background: #dadada; border: 1px solid #8e8e8e; border-radius: 3px; }
  .vgrip { height: 30px; padding-left: 4px; display: flex; justify-content: center; flex: none; }
  .vgrip i { width: 5px; background: radial-gradient(circle at 1px 1px, #bdbdbd 1px, transparent 1.300px) 0 0 / 5px 5px, radial-gradient(circle at 3.500px 3.500px, #c4c4c4 1px, transparent 1.300px) 0 0 / 5px 5px; }
  .hgrip { height: 6px; background: radial-gradient(circle at 1px 1px, #bdbdbd 1px, transparent 1.300px) 0 0 / 5px 6px, radial-gradient(circle at 3.500px 4px, #c4c4c4 1px, transparent 1.300px) 0 0 / 5px 6px; }
  .caret { width: 0; height: 0; border: 5px solid transparent; border-top: 5px solid #000; border-bottom: 0; flex: none; }
  .caret.dim { border-top-color: #9a9a9a; }

  main { height: 864px; display: flex; flex: none; }
  .side { width: 55px; border-top: 1px solid #bcbcbc; border-right: 1px solid #bcbcbc; display: flex; flex-direction: column; padding-top: 6px; }
  .side .hgrip { flex: none; }
  .side .top { margin: 0 3px -2px; }
  .side .mid { margin: 8px 3px -2px; }
  .side-slot { height: 34.150px; display: flex; align-items: center; justify-content: center; flex: none; }
  .withdrop { justify-content: flex-start; padding-left: 7px; gap: 6px; }

  .docks { width: 323px; border-top: 1px solid #bcbcbc; display: flex; flex-direction: column; padding: 0 7px 0 1px; }
  .dock-title { height: 24px; display: flex; align-items: center; gap: 2px; padding-left: 2px; flex: none; }
  .dock-title .hgrip { flex: 1; }
  .dock-title span { padding: 0 4px; letter-spacing: -0.400px; }
  .dock-title.legend { height: 22px; }
  .dock-title.legend span { letter-spacing: -0.250px; }
  .dock-title.road { height: 22px; }
  .mini { width: 15px; height: 15px; border: 1px solid #999; border-radius: 3px; background: #f6f6f6; display: flex; align-items: center; justify-content: center; margin-right: -1px; }
  .mini + .mini { margin-right: 0; }
  .hgrip + .mini { margin-left: 2px; }
  .browser { margin-top: -1px; }
  .tools { display: flex; align-items: center; flex: none; padding-left: 7px; }
  .tools span { width: 16px; }
  .explorer { height: 27px; gap: 11px; }
  .layers-tools { height: 28px; gap: 11px; }
  .layers-tools .caret { margin: 0 0 0 -5px; }

  .tree { margin-top: 9px; height: 107px; border: 1px solid #b5b5b5; border-radius: 2px; background: #fff; display: flex; overflow: hidden; flex: none; }
  .tree ul { flex: 1; padding: 1px 0 0 10px; overflow: hidden; background: repeating-linear-gradient(#aaa 0 1px, transparent 1px 2px) 10px 3px / 1px 97px no-repeat; }
  .tree li { display: flex; align-items: center; white-space: pre; }
  .branch { width: 15px; height: 1px; flex: none; background: repeating-linear-gradient(90deg, #aaa 0 1px, transparent 1px 2px) 5px 0 / 10px 1px no-repeat; display: flex; align-items: center; }
  .tree .branch { margin-left: -5px; }
  .branch em { width: 9px; height: 9px; flex: none; border: 1px solid #888; background: linear-gradient(#333, #333) 1px 3px / 5px 1px no-repeat, linear-gradient(#333, #333) 3px 1px / 1px 5px no-repeat, #fff; }
  .ticon { width: 29px; padding-left: 4px; }
  .ticon.narrow { width: 25px; }
  .scroll { width: 17px; padding: 1px; display: flex; flex-direction: column; }
  .scroll span { flex: 1; background: repeating-conic-gradient(#ddd 0 25%, #fff 0 50%) 0 0 / 2px 2px; }
  .sb, .thumb { height: 16px; border: 1px solid #999; border-radius: 2px; background: linear-gradient(90deg, #fff, #e4e4e4); display: flex; align-items: center; justify-content: center; }
  .thumb { height: 26px; }
  .up, .down { width: 0; height: 0; border: 4px solid transparent; border-top: 0; border-bottom: 4px solid #000; }
  .down { border-bottom: 0; border-top: 4px solid #000; }
  .split { width: 104px; margin: 1px 0 0 105px; flex: none; }

  .layers { height: 197px; margin-top: 8px; border: 1px solid #2588d8; border-radius: 1px; background: repeating-linear-gradient(#aaa 0 1px, transparent 1px 2px) 10px 2px / 1px 61px no-repeat, #fff; flex: none; font-family: 'DejaVu Sans Condensed', 'DejaVu Sans', sans-serif; font-stretch: condensed; font-size: 13px; font-weight: bold; letter-spacing: 0; }
  .layers li { display: flex; align-items: center; padding-left: 5px; white-space: nowrap; }
  .layers .test { height: 17px; background: #0078d7; color: #fff; }
  .layers .attr { height: 17px; }
  .layers .coord { height: 19px; }
  .layers .arr { height: 19px; }
  .layers .branch { width: 18px; }
  .cb { width: 15px; height: 15px; border: 1px solid #bbb; background: #fff; display: flex; align-items: center; justify-content: center; flex: none; }
  .sw { width: 18px; height: 18px; margin: 0 6px 0 7px; border: 1px solid #234; flex: none; }
  .brown { background: #93714a; height: 16px; border-color: #765; margin-right: 3px; }
  .focus { flex: 1; height: 17px; line-height: 15px; padding-left: 2px; border: 1px dotted #e08a3c; }
  .green { background: #53b36b; }
  .dot { width: 11px; height: 11px; border-radius: 50%; border: 1px solid #222; background: #d56ceb; margin: 0 10px 0 12px; flex: none; }
  .tb { width: 22px; }

  .form { display: flex; flex-direction: column; padding: 8px 8px 0 8px; }
  .form label { height: 16px; margin-bottom: 8px; }
  .form input, .field { border: 1px solid #b5b5b5; border-radius: 2px; background: #fff; height: 22px; padding: 0; }
  .form input { width: 299px; margin-bottom: 11px; flex: none; }
  .line { display: flex; align-items: center; gap: 4px; height: 22px; margin-bottom: 7px; }
  .line .field { flex: 1; }
  .criterion { justify-content: space-between; }
  .combo { width: 147px; height: 22px; text-align: left; padding-left: 4px; }
  .form button { border: 1px solid #b5b5b5; border-radius: 2px; background: linear-gradient(#fdfdfd, #e3e3e3); }
  .buttons { display: flex; gap: 10px; margin: 2px 0 9px; }
  .buttons button { flex: 1; height: 28px; }
  .form .aide { height: 31px; display: flex; align-items: center; justify-content: center; gap: 4px; }

  .canvas { width: 1542px; height: 864px; border: 1px solid #b5b5b5; border-width: 2px 2px 2px 1px; background: #fff; overflow: hidden; }

  footer { height: 34px; display: flex; align-items: center; padding: 1px 0 0 5px; white-space: nowrap; }
  footer > * { flex: none; }
  .hint { width: 976px; letter-spacing: -0.150px; }
  .emprise { width: 59px; }
  .box { border: 1px solid #b5b5b5; border-radius: 2px; background: #fff; height: 22px; display: flex; align-items: center; justify-content: space-between; }
  .extent { width: 297px; justify-content: center; letter-spacing: 0.250px; }
  .toggle { width: 20px; height: 28px; border: 1px solid #999; border-radius: 3px; background: #d8d8d8; display: flex; align-items: center; justify-content: center; margin-right: 9px; }
  .echelle { width: 53px; }
  .scale { width: 98px; padding-left: 5px; margin-right: 9px; letter-spacing: -0.100px; }
  .scale b, .spin b { width: 16px; height: 100%; border-left: 1px solid #b5b5b5; background: linear-gradient(#fff, #e4e4e4); display: flex; flex-direction: column; align-items: center; justify-content: center; }
  .rotation { width: 56px; }
  .spin { width: 107px; height: 28px; padding-left: 4px; margin-right: 7px; letter-spacing: 0.100px; }
  .spin b { justify-content: space-around; background: linear-gradient(#fafafa 48%, #b5b5b5 48%, #b5b5b5 52%, #eee 52%); }
  .rendu { width: 54px; padding-left: 7px; }
  .crs { width: 24px; margin-left: 7px; }
  .epsg { letter-spacing: 0; }
  .msg { margin-left: auto; padding-right: 16px; }

  .context { position: absolute; left: 269px; top: 365px; width: 420px; height: 432px; background: #f8f8f8; border: 1px solid #979797; box-shadow: 3px 3px 3px rgba(0, 0, 0, 0.450); font-size: 14.500px; line-height: 20px; letter-spacing: -0.070px; }
  .item { height: 26px; display: flex; align-items: center; white-space: nowrap; }
  .item.tall { height: 28px; }
  .hot { background: linear-gradient(#0082e8, #006cc3); color: #fff; }
  .dotted { letter-spacing: -0.140px; }
  .dots { letter-spacing: -1px; }
  .mark { width: 29px; padding-left: 2px; flex: none; }
  .empty { display: block; width: 13px; height: 13px; margin: -2px 0 0 5px; border: 1px solid #c2c2c2; background: #fcfcfc; }
  .words { flex: 1; }
  .right { border: 4px solid transparent; border-left: 4px solid #000; border-right: 0; margin-right: 12px; }
  hr { height: 2px; margin: 0 5px; border: 0; border-top: 1px solid #b9b9b9; }
</style>
